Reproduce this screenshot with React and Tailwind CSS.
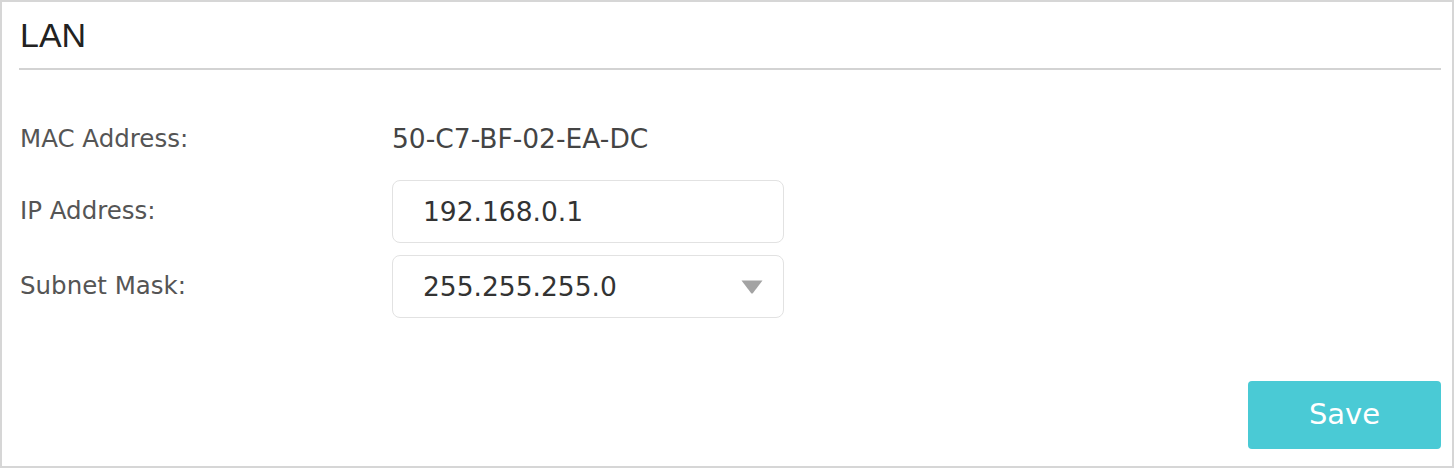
import { useState } from "react";

const sans = "font-['DejaVu_Sans',Verdana,sans-serif]";

export default function App() {
  const [ip, setIp] = useState("192.168.0.1");
  const [mask, setMask] = useState("255.255.255.0");

  return (
    <div className="w-[1454px] h-[469px] bg-white">
      <div className="h-[468px] border-2 border-[#d6d6d6] bg-white pl-[17px] pr-[11px] pt-[14px] flex flex-col">
        <h2 className="font-['Liberation_Sans',Arial,sans-serif] text-[34px] leading-[38px] text-[#222] pl-[1px] font-normal">
          LAN
        </h2>
        <div className="mt-[14px] h-[2px] bg-[#d3d3d3]" />

        <div className={`${sans} mt-[39px] flex flex-col`}>
          <div className="flex items-center h-[60px]">
            <div className="w-[373px] pl-[1px] text-[24.5px] text-[#555]">MAC Address:</div>
            <div className="text-[26.5px] text-[#444]">50-C7-BF-02-EA-DC</div>
          </div>

          <div className="flex items-center mt-[11px]">
            <div className="w-[373px] pl-[1px] text-[24.5px] text-[#555]">IP Address:</div>
            <input
              value={ip}
              onChange={(e) => setIp(e.target.value)}
              className="w-[392px] h-[63px] rounded-[8px] border border-[#e2e2e2] px-[30px] text-[26.5px] text-[#333] outline-none"
            />
          </div>

          <div className="flex items-center mt-[12px]">
            <div className="w-[373px] pl-[1px] text-[24.5px] text-[#555]">Subnet Mask:</div>
            <div className="relative w-[392px] h-[63px] rounded-[8px] border border-[#e2e2e2] flex items-center pl-[30px] pr-[20px]">
              <span className="flex-1 text-[26.5px] text-[#333]">{mask}</span>
              <svg width="22" height="14" viewBox="0 0 22 14">
                <path d="M0.5 0.5 H21.5 L12 13 Q11 14 10 13 Z" fill="#a3a3a3" />
              </svg>
              <select
                value={mask}
                onChange={(e) => setMask(e.target.value)}
                className="absolute inset-0 opacity-0 cursor-pointer"
              >
                <option>255.255.255.0</option>
                <option>255.255.0.0</option>
                <option>255.0.0.0</option>
              </select>
            </div>
          </div>
        </div>

        <div className="mt-auto mb-[17px] flex justify-end">
          <button className={`${sans} w-[193px] h-[68px] rounded-[4px] bg-[#4acad5] text-white text-[29px]`}>
            Save
          </button>
        </div>
      </div>
    </div>
  );
}
